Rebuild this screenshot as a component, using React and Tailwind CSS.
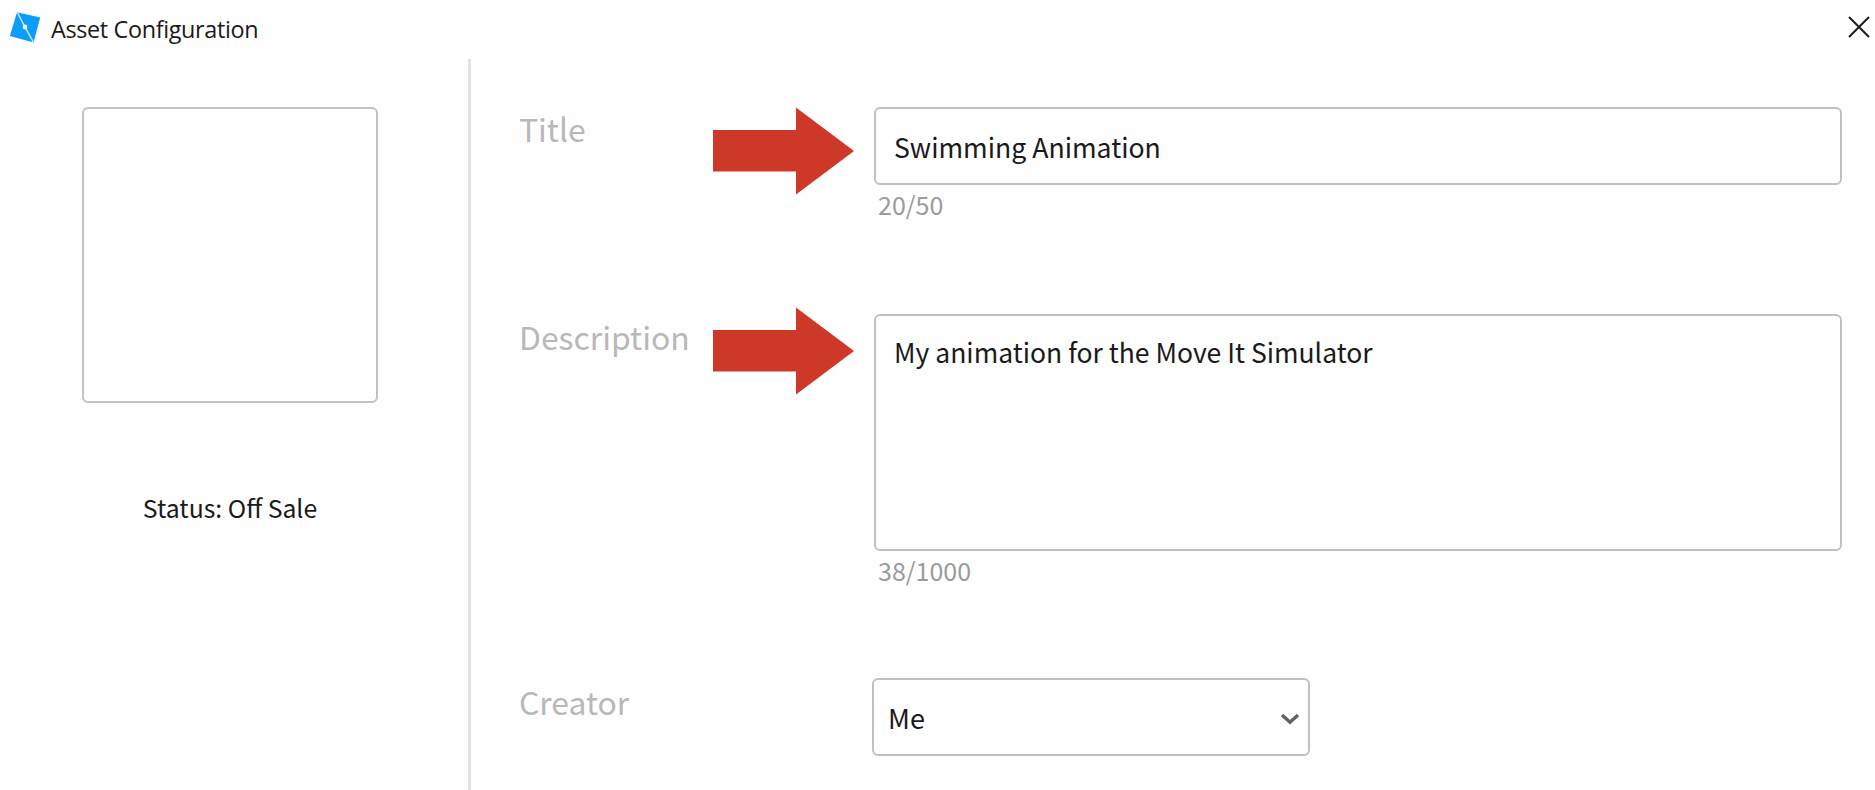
function LogoIcon() {
  return (
    <svg width="32" height="32" viewBox="0 0 32 32" className="shrink-0">
      <path d="M8 1.2 L31.2 6.6 L24.6 31.4 L0.8 25 Z" fill="#0c9dfb" />
      <path d="M8.4 1.6 L16 16 L24.2 30.8" stroke="#c9eaff" strokeWidth="1.4" fill="none" />
      <circle cx="16" cy="16" r="2.4" fill="#f4fbff" />
    </svg>
  );
}

function CloseIcon() {
  return (
    <svg width="22" height="22" viewBox="0 0 22 22">
      <path d="M1 1 L21 21 M21 1 L1 21" stroke="#1c1c1c" strokeWidth="2" fill="none" />
    </svg>
  );
}

function Arrow() {
  return (
    <svg width="142" height="88" viewBox="0 0 142 88">
      <path d="M0 23 H83 V0.5 L141 44 L83 87.5 V64.5 H0 Z" fill="#ce3829" />
    </svg>
  );
}

function Chevron() {
  return (
    <svg width="20" height="14" viewBox="0 0 20 14" className="mt-0.5">
      <path d="M2 3 L10 10.3 L18 3" stroke="#626262" strokeWidth="3.4" fill="none" />
    </svg>
  );
}

function Row({ label, labelClass, arrowClass, className, children }) {
  return (
    <div className={"flex items-start " + className}>
      <div className={"w-[194px] text-[31.9px] leading-10 text-[#b8b8b8] " + labelClass}>{label}</div>
      <div className={"w-[142px] shrink-0 " + (arrowClass || "")}>{arrowClass && <Arrow />}</div>
      {children}
    </div>
  );
}

export default function App() {
  return (
    <div className="flex h-[790px] w-[1875px] flex-col overflow-hidden bg-[#fefefe] font-['Noto_Sans_CJK_SC',sans-serif] text-[#1a1a1a]">
      <header className="flex h-[59px] items-start justify-between pl-[9px] pr-[5px]">
        <div className="flex">
          <div className="pt-[11px]">
            <LogoIcon />
          </div>
          <h1 className="ml-[10px] pt-[13px] font-['Open_Sans',sans-serif] text-[23.4px] leading-8 tracking-[-0.35px]">Asset Configuration</h1>
        </div>
        <button className="pt-4" aria-label="Close">
          <CloseIcon />
        </button>
      </header>
      <div className="flex grow">
        <aside className="flex w-[471px] flex-col items-start border-r-[3px] border-[#e2e2e2] pl-[82px] pt-12">
          <div className="size-[296px] rounded-md border-2 border-[#c2c2c2]" />
          <p className="mt-[88px] w-[296px] text-center text-[24.8px] leading-8">Status: Off Sale</p>
        </aside>
        <main className="flex grow flex-col pl-[48px] pt-12">
          <Row label="Title" labelClass="pt-px" arrowClass="pt-0" className="h-[207px]">
            <div className="ml-[19px]">
              <div className="flex h-[78px] w-[968px] items-center rounded-md border-2 border-[#c0c0c0] pl-[18px] pt-0.5 text-[26.6px]">Swimming Animation</div>
              <div className="pl-1 pt-[3px] text-[25px] leading-8 text-[#9b9b9b]">20/50</div>
            </div>
          </Row>
          <Row label="Description" labelClass="pt-0.5" arrowClass="-mt-[7px]" className="h-[364px]">
            <div className="ml-[19px]">
              <div className="h-[237px] w-[968px] rounded-md border-2 border-[#c0c0c0] pl-[18px] pt-[18px] text-[26.5px] leading-9">My animation for the Move It Simulator</div>
              <div className="pl-1 pt-[3px] text-[25px] leading-8 text-[#9b9b9b]">38/1000</div>
            </div>
          </Row>
          <Row label="Creator" labelClass="pt-[3px]" className="h-[80px]">
            <div className="ml-[17px] flex h-[78px] w-[438px] items-center justify-between rounded-md border-2 border-[#c0c0c0] pl-[14px] pr-[8px] pt-0.5 text-[27px]">
              <span>Me</span>
              <Chevron />
            </div>
          </Row>
        </main>
      </div>
    </div>
  );
}
